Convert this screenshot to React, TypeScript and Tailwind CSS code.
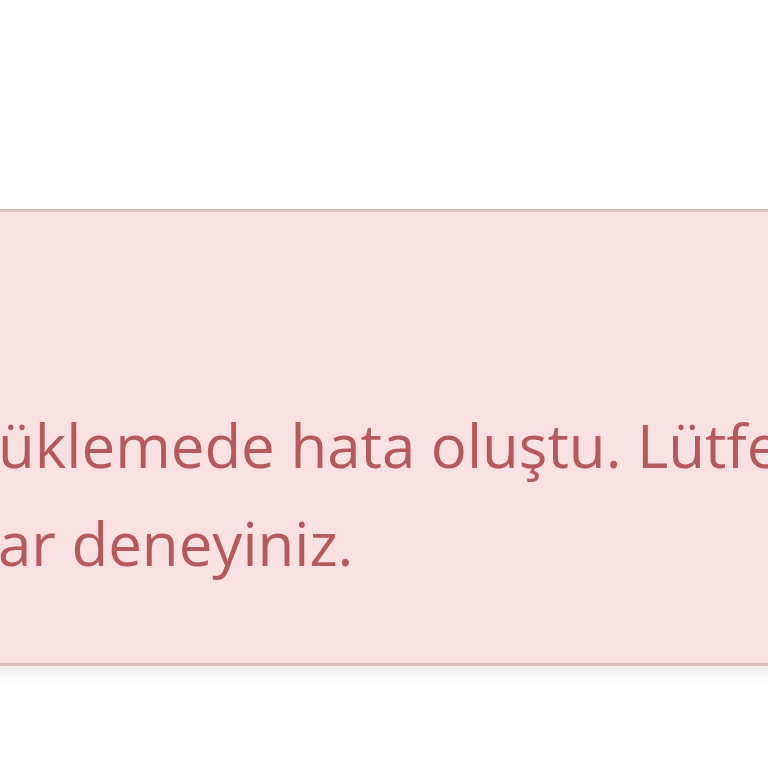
import React from "react";

const App: React.FC = () => {
  return (
    <div className="w-[768px] h-[768px] overflow-hidden bg-white" style={{ fontFamily: '"Open Sans", sans-serif' }}>
      <section className="pt-[209px]">
        {/* Alert */}
        <div className="-mx-[40px] border-y-[3px] border-[#dcbfbf] bg-[#f9e1e1] shadow-[0_8px_10px_rgba(120,80,80,0.12)]">
          <p className="pl-[38px] pt-[184px] pb-[71px] text-[60px] leading-[98px] text-[#b45a5c] whitespace-nowrap">
            üklemede hata oluştu. Lütfen
            <br />
            ar deneyiniz.
          </p>
        </div>
      </section>
    </div>
  );
};

export default App;
